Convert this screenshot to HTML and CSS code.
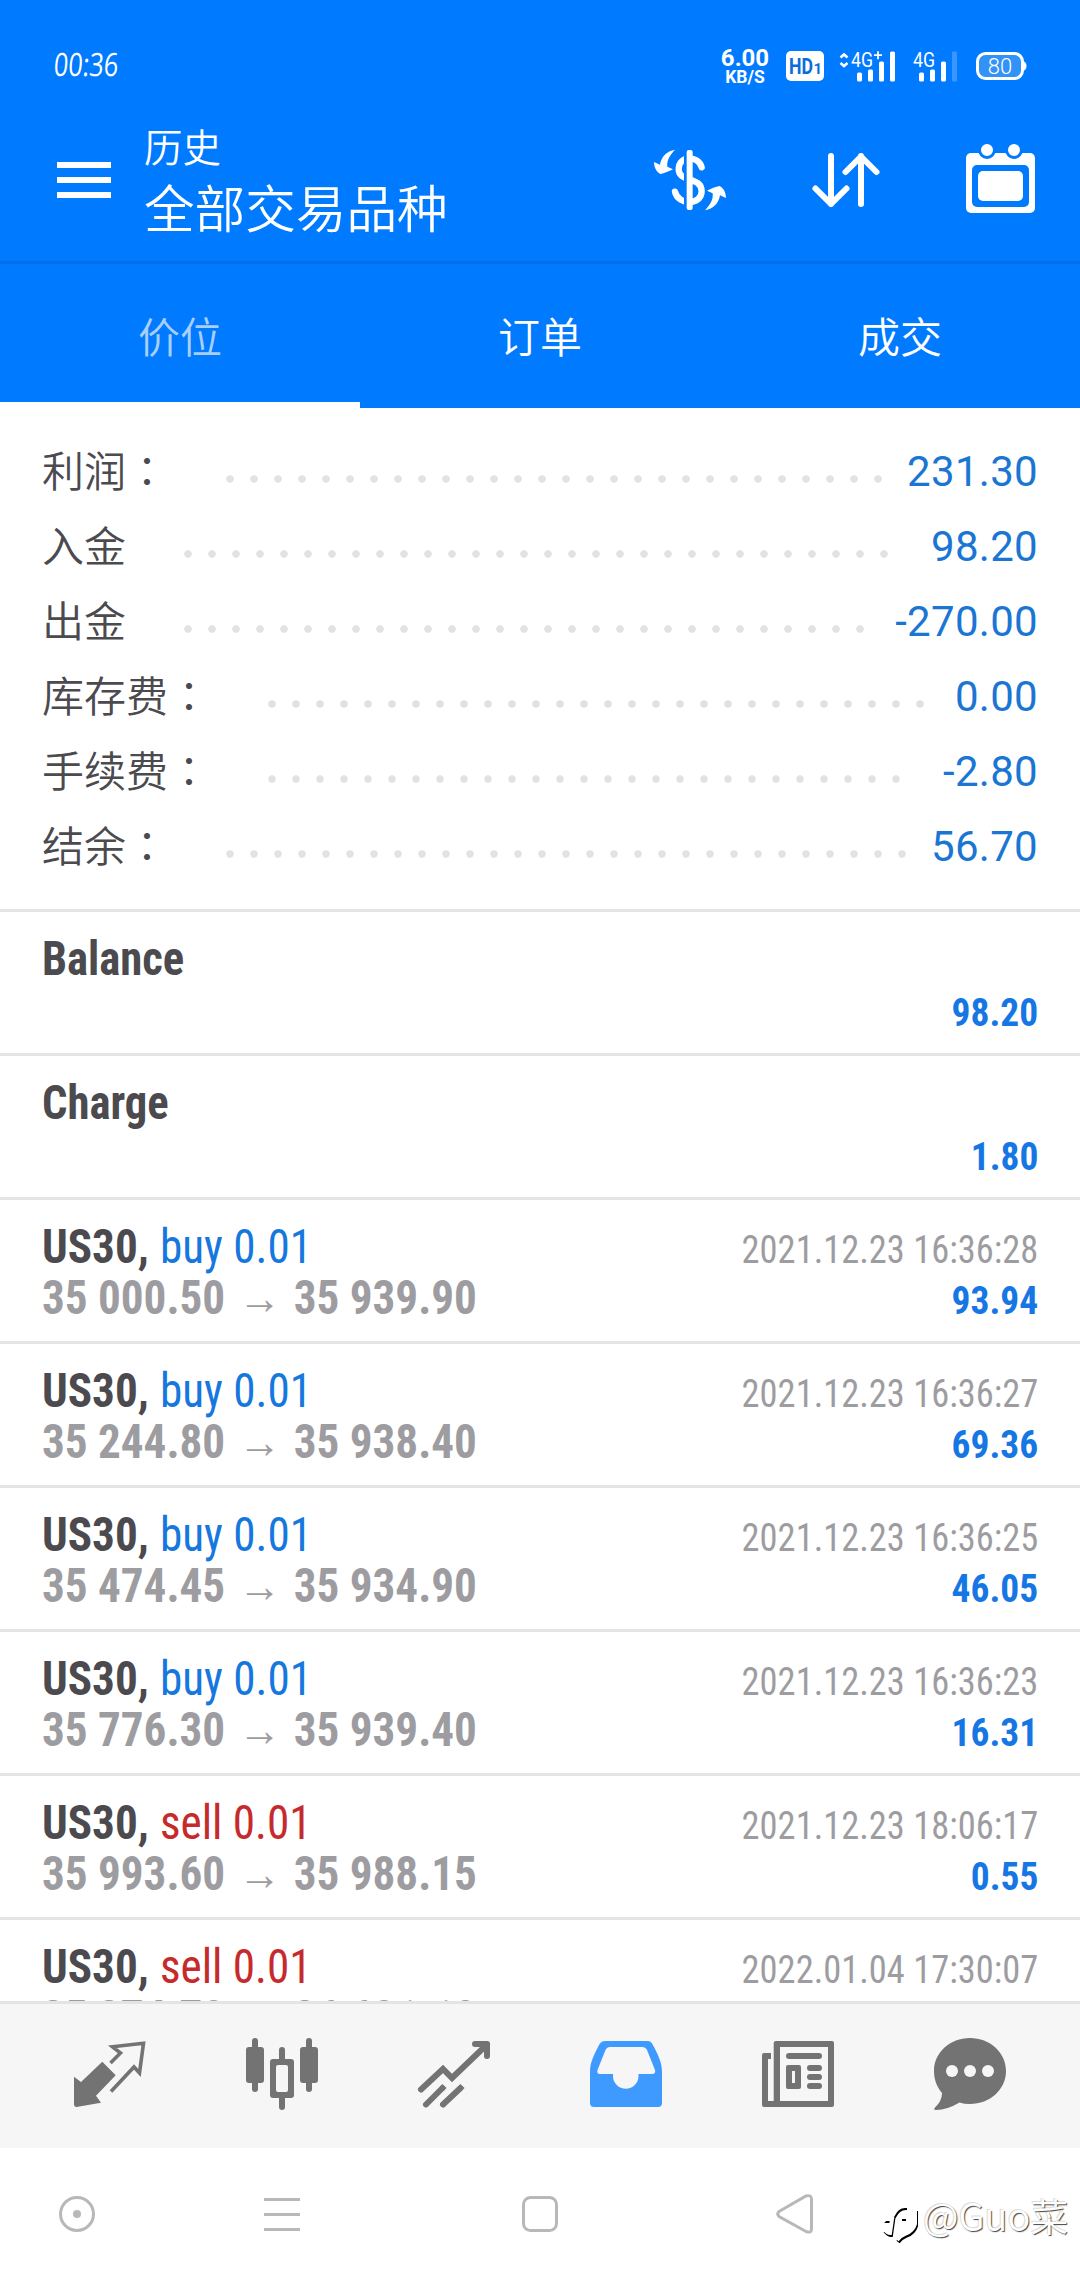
FILE: index.html
```html
<!DOCTYPE html>
<html lang="zh-CN">
<head>
<meta charset="utf-8">
<title>历史</title>
<link rel="stylesheet" href="styles.css">
</head>
<body>
<div class="phone">
  <div class="status">
    <span class="clock">00:36</span>
    <div class="speed"><b class="speed-num">6.00</b><b class="speed-unit">KB/S</b></div>
    <svg class="hd" width="38" height="30" viewBox="0 0 38 30"><rect width="38" height="30" rx="5" fill="#fff"/><text x="3" y="23" font-size="22" font-weight="700" fill="#0a6ddb" textLength="24" lengthAdjust="spacingAndGlyphs">HD</text><text x="27.500" y="23" font-size="15" font-weight="700" fill="#0a6ddb">1</text></svg>
    <svg class="sig1" width="57" height="32" viewBox="0 0 57 32" fill="#fff"><path d="M1.5 7.5 L5 4.5 L8.5 7.5 M1.5 13 L5 16 L8.5 13" fill="none" stroke="#fff" stroke-width="2.6"/><text x="12" y="17" font-size="21" textLength="22" lengthAdjust="spacingAndGlyphs">4G</text><path d="M35 5.2h8M39 1.2v8" stroke="#fff" stroke-width="1.8"/><rect x="18" y="22.500" width="5" height="9" rx="1.500"/><rect x="29" y="19.500" width="5" height="12" rx="1.500"/><rect x="40" y="11.500" width="5" height="20" rx="1.500"/><rect x="51" y="1.500" width="5" height="30" rx="1.500"/></svg>
    <svg class="sig2" width="45" height="32" viewBox="0 0 45 32" fill="#fff"><text x="0" y="17" font-size="21" textLength="22" lengthAdjust="spacingAndGlyphs">4G</text><rect x="6" y="22.500" width="5" height="9" rx="1.500"/><rect x="17" y="19.500" width="5" height="12" rx="1.500"/><rect x="28" y="11.500" width="5" height="20" rx="1.500"/><rect x="39" y="1.500" width="5" height="30" rx="1" opacity=".22"/></svg>
    <svg class="battery" width="51" height="28" viewBox="0 0 51 28"><rect x="1.500" y="1.500" width="45" height="25" rx="8" fill="#3392f5" stroke="#fff" stroke-width="3"/><path d="M47 9 Q50.500 10 50.500 14 T47 19Z" fill="#fff"/><text x="24" y="21.500" font-size="22" font-weight="300" text-anchor="middle" fill="#fff">80</text></svg>
  </div>
  <header class="header">
    <svg class="menu" width="54" height="36" viewBox="0 0 54 36" fill="#fff"><path d="M0 0h54v6H0zM0 15h54v6H0zM0 30h54v6H0z"/></svg>
    <div class="titles"><div class="sub">历史</div><div class="main-title">全部交易品种</div></div>
    <div class="actions">
      <svg width="90" height="80" viewBox="0 0 270 240"><path d="M170 82C160 45 101 45 101 88C101 128 170 108 170 154C170 196 100 198 90 155" fill="none" stroke="#fff" stroke-width="19" stroke-linecap="round"/><path d="M117 30h10v180h-10z" fill="#007aff"/><rect x="125" y="30" width="18" height="180" rx="6" fill="#fff"/><path id="swoop" d="M90 29C65 33 49 50 45 74L27 66C27 80 33 95 46 102C58 100 72 94 84 88L67 80C65 60 75 45 90 29Z" fill="#fff"/><use href="#swoop" transform="rotate(180 135 120)"/></svg>
      <svg width="84" height="84" viewBox="0 0 84 84" fill="none" stroke="#fff" stroke-width="6" stroke-linecap="round" stroke-linejoin="round"><path d="M27 18V66M11.500 50.500L27 66L42.500 50.500M57 66V18M41.500 34L57 18.500L72.500 34"/></svg>
      <svg width="84" height="84" viewBox="0 0 84 84" fill="#fff"><rect x="6" y="15" width="69" height="60" rx="5"/><rect x="12" y="27" width="57" height="42" rx="5" fill="#007aff"/><rect x="18" y="33" width="45" height="30" rx="5"/><g stroke="#007aff" stroke-width="3"><circle cx="27" cy="12" r="7.500"/><circle cx="54" cy="12" r="7.500"/></g></svg>
    </div>
  </header>
  <nav class="tabs"><div class="tab active">价位</div><div class="tab">订单</div><div class="tab">成交</div></nav>
  <section class="summary">
    <div class="sum"><span class="label">利润<i lang="zh-Hant">：</i></span><span class="leader"><span class="dots"></span></span><span class="value">231.30</span></div>
    <div class="sum"><span class="label">入金</span><span class="leader"><span class="dots"></span></span><span class="value">98.20</span></div>
    <div class="sum"><span class="label">出金</span><span class="leader"><span class="dots"></span></span><span class="value">-270.00</span></div>
    <div class="sum"><span class="label">库存费<i lang="zh-Hant">：</i></span><span class="leader"><span class="dots"></span></span><span class="value">0.00</span></div>
    <div class="sum"><span class="label">手续费<i lang="zh-Hant">：</i></span><span class="leader"><span class="dots"></span></span><span class="value">-2.80</span></div>
    <div class="sum"><span class="label">结余<i lang="zh-Hant">：</i></span><span class="leader"><span class="dots"></span></span><span class="value">56.70</span></div>
  </section>
  <main class="deals">
    <article class="deal"><div class="line"><b class="symbol">Balance</b></div><div class="line"><b class="profit">98.20</b></div></article>
    <article class="deal"><div class="line"><b class="symbol">Charge</b></div><div class="line"><b class="profit">1.80</b></div></article>
    <article class="deal"><div class="line"><span class="order"><b class="symbol">US30,</b><span class="buy">buy 0.01</span></span><span class="date">2021.12.23 16:36:28</span></div><div class="line"><b class="price">35 000.50<span class="arrow">→</span>35 939.90</b><b class="profit">93.94</b></div></article>
    <article class="deal"><div class="line"><span class="order"><b class="symbol">US30,</b><span class="buy">buy 0.01</span></span><span class="date">2021.12.23 16:36:27</span></div><div class="line"><b class="price">35 244.80<span class="arrow">→</span>35 938.40</b><b class="profit">69.36</b></div></article>
    <article class="deal"><div class="line"><span class="order"><b class="symbol">US30,</b><span class="buy">buy 0.01</span></span><span class="date">2021.12.23 16:36:25</span></div><div class="line"><b class="price">35 474.45<span class="arrow">→</span>35 934.90</b><b class="profit">46.05</b></div></article>
    <article class="deal"><div class="line"><span class="order"><b class="symbol">US30,</b><span class="buy">buy 0.01</span></span><span class="date">2021.12.23 16:36:23</span></div><div class="line"><b class="price">35 776.30<span class="arrow">→</span>35 939.40</b><b class="profit">16.31</b></div></article>
    <article class="deal"><div class="line"><span class="order"><b class="symbol">US30,</b><span class="sell">sell 0.01</span></span><span class="date">2021.12.23 18:06:17</span></div><div class="line"><b class="price">35 993.60<span class="arrow">→</span>35 988.15</b><b class="profit">0.55</b></div></article>
    <article class="deal"><div class="line"><span class="order"><b class="symbol">US30,</b><span class="sell">sell 0.01</span></span><span class="date">2022.01.04 17:30:07</span></div><div class="line"><b class="price">35 374.70<span class="arrow">→</span>36 621.10</b></div></article>
  </main>
  <nav class="bottom">
    <svg viewBox="0 0 72 72"><path d="M0 38.700L7 44L28.300 23.700L41.700 37.300L22 57.700L27 64.700L2.500 69Q0 69 0 66Z" fill="#737373"/><path d="M36.500 25L46.500 15L38.500 8.800L69.500 5.300L65.500 35L60 29L37 53.500" fill="none" stroke="#737373" stroke-width="3.600"/></svg>
    <svg viewBox="0 0 72 72" fill="#737373"><rect x="6" width="6" height="54" rx="3"/><rect y="9" width="18" height="36" rx="3"/><rect x="60" width="6" height="54" rx="3"/><rect x="54" y="9" width="18" height="36" rx="3"/><rect x="33" y="9" width="6" height="63" rx="3"/><rect x="24" y="21" width="24" height="39" rx="3"/><rect x="30" y="27" width="12" height="27" rx="2" fill="#f6f6f6"/></svg>
    <svg viewBox="0 0 72 72" fill="none" stroke="#737373" stroke-width="6" stroke-linecap="round"><path d="M3 51.500L25 31L34 40L69 6.500"/><path d="M57 6H69V18" stroke-linejoin="round"/><path d="M8 66.500L24 50.500M25 66.500L42 50.500"/><path d="M24 50.500L26.500 48M42 50.500L44.500 48" stroke-linecap="butt"/></svg>
    <svg viewBox="0 0 72 72"><path fill-rule="evenodd" fill="#3f9aff" d="M15 3H58C61 3 62.500 6 64 9C69 19 72 25 72 34V65Q72 69 68 69H4Q0 69 0 65V34C0 25 3 19 8 9C9.500 6 11 3 15 3ZM20 9Q17 9 15.500 12L7.500 32Q6.500 36 10 36H23V38A12.700 12.700 0 0 0 48.500 38V36H62Q66 36 65 32L57 12Q55.500 9 52 9Z"/></svg>
    <svg viewBox="0 0 72 72" fill="#737373"><path fill-rule="evenodd" d="M14 3H70Q72 3 72 5V67Q72 69 70 69H2Q0 69 0 67V17Q0 15 2 15H9V21H6V63H11.700V5Q11.700 3 14 3ZM18 9V63H66V9Z"/><rect x="24" y="15" width="36" height="6" rx="3"/><path fill-rule="evenodd" d="M26 27H37Q39 27 39 29V49Q39 51 37 51H26Q24 51 24 49V29Q24 27 26 27ZM30 33V45H33V33Z"/><rect x="45" y="27" width="15" height="6" rx="3"/><rect x="45" y="36" width="15" height="6" rx="3"/><rect x="45" y="45" width="15" height="6" rx="3"/></svg>
    <svg viewBox="0 0 72 72"><path fill="#737373" d="M36 0C56 0 72 14.500 72 33S56 66 36 66Q30 66 25.500 64.500Q13 72 2 72Q-1 72 1 69.500Q8 63 8 55C3 49 0 42 0 33C0 14.500 16 0 36 0Z"/><g fill="#f6f6f6"><circle cx="18" cy="33" r="6"/><circle cx="36" cy="33" r="6"/><circle cx="54" cy="33" r="6"/></g></svg>
  </nav>
  <footer class="system">
    <svg class="s-circle" width="36" height="36" viewBox="0 0 36 36"><circle cx="18" cy="18" r="16.500"/><circle cx="18" cy="18" r="4" class="solid"/></svg>
    <svg class="s-lines" width="36" height="36" viewBox="0 0 36 36"><path d="M0 3.500H36M0 18.500H36M0 33.500H36"/></svg>
    <svg class="s-square" width="36" height="36" viewBox="0 0 36 36"><rect x="1.500" y="1.500" width="33" height="33" rx="7"/></svg>
    <svg class="s-back" width="38" height="40" viewBox="0 0 38 40"><path d="M3 17.500L30 2Q35.500 .5 35.500 5V35Q35.500 39.500 30 37.500L3 22.500Q.5 20 3 17.500Z"/></svg>
    <div class="mark"><svg width="38" height="42" viewBox="0 0 38 42"><path class="mark-shadow" d="M3 32Q7 36 9 36L11 22H7Q10 19 12 18Q16 9 24 9H25M20 20H24M34 12V27Q32 34 24 37Q19 39 16 43"/><path class="mark-face" d="M2 30Q6 34 8 34L10 20H6Q9 17 11 16Q15 7 23 7H29Q33 8 33 12V25Q31 32 23 35Q18 37 15 41M19 18H24"/></svg><span>@Guo菜</span></div>
  </footer>
</div>
</body>
</html>
```
FILE: styles.css
```css
* { box-sizing: border-box; }
body { margin: 0; background: #fff; font-family: Roboto, "Noto Sans CJK SC", sans-serif; }
svg { display: block; flex: none; overflow: visible; }
svg text { font-family: Roboto, sans-serif; }
.phone { width: 1080px; height: 2280px; display: flex; flex-direction: column; overflow: hidden; }

.status { height: 110px; background: #007aff; color: #fff; display: flex; align-items: flex-start; padding: 0 53px 0 54px; flex: none; }
.clock { font: 400 32px/40px "Open Sans", sans-serif; margin-top: 44px; width: 669px; transform: scaleX(.79) skewX(-6deg); transform-origin: left; }
.speed { width: 47px; margin-top: 47px; display: flex; flex-direction: column; align-items: center; }
.speed-num { font-size: 24px; line-height: 22px; }
.speed-unit { font-size: 17.500px; line-height: 16px; }
.hd { margin: 51px 0 0 17.500px; }
.sig1 { margin: 49.500px 0 0 14.500px; }
.sig2 { margin: 49.500px 0 0 17px; }
.battery { margin: 52px 0 0 18.500px; }

.header { height: 154px; background: #007aff; border-bottom: 3px solid #0070ea; color: #fff; display: flex; align-items: flex-start; flex: none; font-family: "Noto Sans CJK SC", sans-serif; font-weight: 350; }
.menu { margin: 52px 33px 0 57px; }
.sub { font-size: 38.500px; line-height: 50px; margin-top: 10px; }
.main-title { font-size: 50.600px; line-height: 66px; margin-top: 3px; }
.actions { margin-left: auto; height: 140px; display: grid; grid-template-columns: repeat(3, 156px); align-items: center; justify-items: center; }

.tabs { height: 144px; background: #007aff; color: #fff; display: flex; flex: none; font-family: "Noto Sans CJK SC", sans-serif; font-size: 42px; font-weight: 350; }
.tab { flex: 1; padding-top: 8px; line-height: 126px; text-align: center; border-bottom: 6px solid transparent; }
.active { color: #a8cffb; border-color: #fff; }

.summary { height: 504px; padding: 26px 42px 25px; border-bottom: 3px solid #e4e4e4; flex: none; }
.sum { height: 75px; display: flex; align-items: center; font-size: 42px; }
.label { color: #4b4a4f; font-family: "Noto Sans CJK SC", sans-serif; font-weight: 350; line-height: 64px; margin-bottom: 6px; }
.label i { font-family: "Noto Sans CJK TC", sans-serif; font-style: normal; }
.leader { flex: 1; margin: 15px 13px 0 50px; }
.dots { display: block; width: round(down, 100%, 24px); height: 8px; background: radial-gradient(circle at 12px 4px, #e2e2e2 3.400px, transparent 4.100px) 0 0 / 24px 8px repeat-x; }
.value { color: #1a76d2; letter-spacing: .3px; }

.deals { height: 1089px; overflow: hidden; flex: none; font-family: "Roboto Condensed", Roboto, sans-serif; }
.deal { height: 144px; padding: 21px 42px 0; border-bottom: 3px solid #e4e4e4; }
.line { height: 51px; line-height: 51px; font-size: 48px; display: flex; align-items: baseline; white-space: pre; }
.line::before { content: "\200b"; width: 0; }
.line > * { transform: scaleX(.94); transform-origin: left; }
.line > .symbol { transform: scaleX(.93); }
.symbol { color: #4b4a4f; }
.buy { color: #1677de; margin-left: 12px; }
.sell { color: #c52a2c; margin-left: 12px; }
.line > .date { margin-left: auto; font-size: 39px; color: #9d9da1; transform: scaleX(.935); transform-origin: right; }
.price { color: #9d9da1; }
.arrow { display: inline-block; width: 73px; text-indent: 1px; text-align: center; font: 700 46px/40px "Liberation Sans", sans-serif; }
.line > .profit { margin-left: auto; font-size: 39px; color: #1677e4; transform: scaleX(.96); transform-origin: right; }

.bottom { height: 147px; padding: 34px 24px 0; border-top: 3px solid #e4e4e4; background: #f6f6f6; display: grid; grid-template-columns: repeat(6, 1fr); justify-items: center; flex: none; }
.bottom svg { width: 72px; height: 72px; }

.system { height: 132px; position: relative; display: flex; align-items: flex-start; padding: 48px 0 0 59px; flex: none; }
.system > svg { fill: none; stroke: #b8b8b8; stroke-width: 3; }
.system .solid { fill: #b8b8b8; stroke: none; }
.s-lines { margin-left: 169px; }
.s-square { margin-left: 222px; }
.s-back { margin: -2px 0 0 218px; }
.mark { position: absolute; left: 882px; top: 39px; display: flex; color: #fff; font: 350 38px/56px "Noto Sans CJK SC", sans-serif; text-shadow: 1px 1px 1px #444, -1px -1px 0 #ddd; }
.mark svg { margin: 12px 3px 0 0; fill: none; }
.mark-shadow { stroke: #000; stroke-width: 4; }
.mark-face { stroke: #fff; stroke-width: 4; }
```
